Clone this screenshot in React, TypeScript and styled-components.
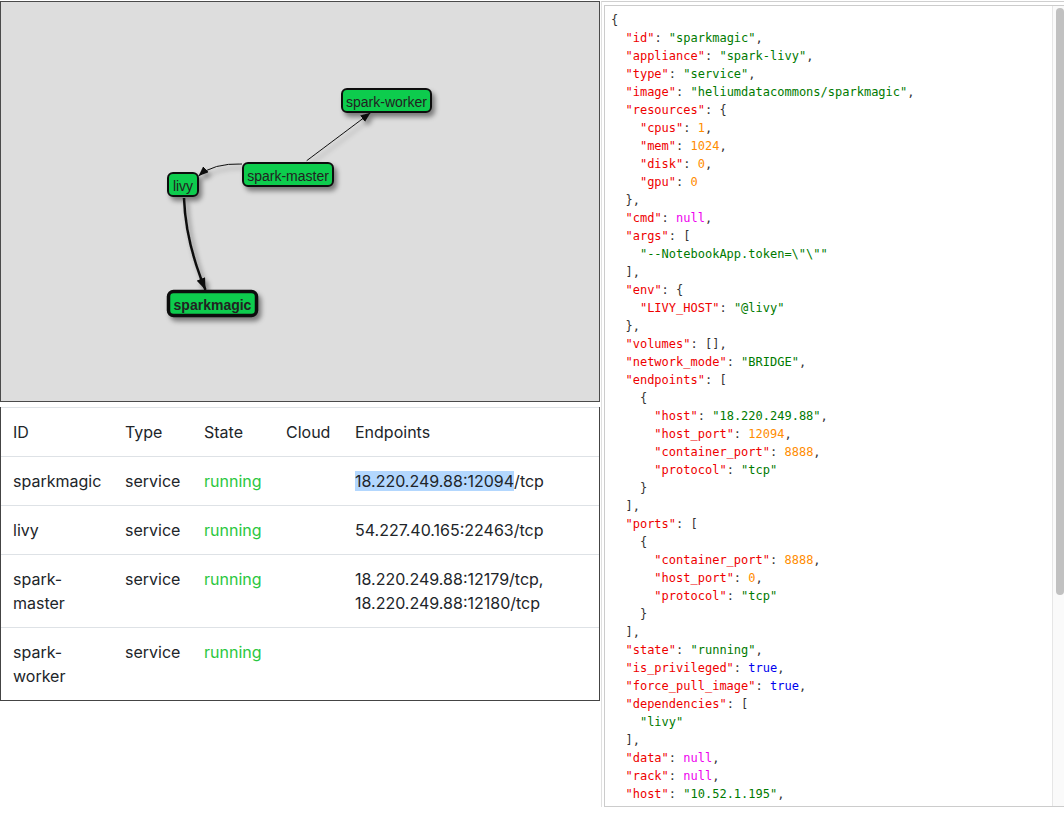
import React, { ReactNode } from "react";
import styled, { createGlobalStyle } from "styled-components";

const GlobalStyle = createGlobalStyle`
  html, body { margin: 0; padding: 0; background: #fff; overflow: hidden; }
  body { font-family: Inter, "Liberation Sans", sans-serif; color: #212529; }
  * { box-sizing: border-box; }
`;

const Page = styled.div`
  display: flex;
  align-items: flex-start;
  width: 1068px;
`;

const LeftCol = styled.div`
  width: 600px;
  flex: none;
  display: flex;
  flex-direction: column;
  padding-top: 1px;
`;

const GraphBox = styled.div`
  height: 401px;
  border: 1px solid #4a4a4a;
  background: #dddddd;
  overflow: hidden;
  svg { display: block; }
`;

const TableBox = styled.div`
  margin-top: 5px;
  border: 1px solid #444;
  border-top: none;
`;

const Table = styled.table`
  width: 100%;
  border-collapse: collapse;
  table-layout: fixed;
  font-size: 16px;
  line-height: 24px;
`;

const Th = styled.th<{ $w?: number }>`
  ${(p) => (p.$w ? `width: ${p.$w}px;` : "")}
  text-align: left;
  font-weight: 400;
  padding: 12px;
  border-top: 1px solid #dee2e6;
  vertical-align: top;
`;

const Td = styled.td`
  padding: 12px;
  border-top: 1px solid #dee2e6;
  vertical-align: top;
`;

const Running = styled.span`
  color: #2ac740;
`;

const Selected = styled.span`
  background: #b3d7fe;
`;

const RightCol = styled.div`
  width: 467px;
  flex: none;
  margin-top: 1px;
  margin-left: 1px;
  border-top: 1px solid #cfcfcf;
  border-left: 1px solid #e0e0e0;
  padding: 3px 0 0 2px;
`;

const CodeBox = styled.div`
  height: 802px;
  border: 1px solid #cccccc;
  display: flex;
  overflow: hidden;
`;

const CodeBody = styled.div`
  flex: 1;
  min-width: 0;
  padding: 5px 6px;
  font-family: "DejaVu Sans Mono", "Liberation Mono", monospace;
  font-size: 12px;
  line-height: 18px;
  color: #333;
  overflow: hidden;
`;

const ScrollTrack = styled.div`
  width: 15px;
  flex: none;
  background: #fafafa;
  border-left: 1px solid #e6e6e6;
  padding: 2px 0 0 3px;
`;

const ScrollThumb = styled.div`
  width: 8px;
  height: 587px;
  border-radius: 4px;
  background: #c1c1c1;
`;

const Line = styled.div`
  white-space: pre;
`;

const Key = styled.span` color: #ee0000; `;
const Str = styled.span` color: #007a00; `;
const Num = styled.span` color: #ff8c00; `;
const Nul = styled.span` color: #ee00ee; `;
const Bool = styled.span` color: #0000ee; `;

type J = string | number | boolean | null | J[] | { [k: string]: J };

const data: J = {
  id: "sparkmagic",
  appliance: "spark-livy",
  type: "service",
  image: "heliumdatacommons/sparkmagic",
  resources: { cpus: 1, mem: 1024, disk: 0, gpu: 0 },
  cmd: null,
  args: ['--NotebookApp.token=""'],
  env: { LIVY_HOST: "@livy" },
  volumes: [],
  network_mode: "BRIDGE",
  endpoints: [
    { host: "18.220.249.88", host_port: 12094, container_port: 8888, protocol: "tcp" },
  ],
  ports: [{ container_port: 8888, host_port: 0, protocol: "tcp" }],
  state: "running",
  is_privileged: true,
  force_pull_image: true,
  dependencies: ["livy"],
  data: null,
  rack: null,
  host: "10.52.1.195",
  last_update: null,
};

const VISIBLE_LINES = 44;

const token = (v: string | number | boolean | null) => {
  if (v === null) return <Nul>null</Nul>;
  if (typeof v === "string") return <Str>{JSON.stringify(v)}</Str>;
  if (typeof v === "number") return <Num>{String(v)}</Num>;
  return <Bool>{String(v)}</Bool>;
};

const renderJson = (v: J, depth: number, keyName: string | null, comma: boolean, out: ReactNode[]) => {
  const pad = "  ".repeat(depth);
  const prefix =
    keyName !== null ? (
      <>
        <Key>"{keyName}"</Key>:{" "}
      </>
    ) : null;
  const c = comma ? "," : "";
  if (Array.isArray(v)) {
    if (v.length === 0) {
      out.push(<Line key={out.length}>{pad}{prefix}[]{c}</Line>);
      return;
    }
    out.push(<Line key={out.length}>{pad}{prefix}[</Line>);
    v.forEach((x, i) => renderJson(x, depth + 1, null, i < v.length - 1, out));
    out.push(<Line key={out.length}>{pad}]{c}</Line>);
  } else if (v !== null && typeof v === "object") {
    const keys = Object.keys(v);
    out.push(<Line key={out.length}>{pad}{prefix}{"{"}</Line>);
    keys.forEach((k, i) => renderJson(v[k], depth + 1, k, i < keys.length - 1, out));
    out.push(<Line key={out.length}>{pad}{"}"}{c}</Line>);
  } else {
    out.push(
      <Line key={out.length}>
        {pad}
        {prefix}
        {token(v)}
        {c}
      </Line>
    );
  }
};

type Node = { id: string; x: number; y: number; w: number; h: number; main?: boolean };

const nodes: Node[] = [
  { id: "spark-worker", x: 342, y: 89, w: 89, h: 23 },
  { id: "spark-master", x: 243, y: 163, w: 90, h: 23 },
  { id: "livy", x: 168, y: 173, w: 30, h: 23 },
  { id: "sparkmagic", x: 168.5, y: 291.5, w: 88, h: 24, main: true },
];

const Graph = () => (
  <svg width={598} height={399} viewBox="1 2 598 399">
    <defs>
      <filter id="shadow" x="-30%" y="-50%" width="160%" height="200%">
        <feDropShadow dx="3" dy="4" stdDeviation="2.5" floodColor="#000" floodOpacity="0.45" />
      </filter>
      <marker id="arrow" viewBox="0 0 10 8" refX="10" refY="4" markerWidth="10" markerHeight="8" markerUnits="userSpaceOnUse" orient="auto">
        <path d="M0,0 L10,4 L0,8 z" fill="#111" />
      </marker>
      <marker id="arrowBig" viewBox="0 0 12 9" refX="12" refY="4.5" markerWidth="12" markerHeight="9" markerUnits="userSpaceOnUse" orient="auto">
        <path d="M0,0 L12,4.5 L0,9 z" fill="#111" />
      </marker>
    </defs>
    <g filter="url(#shadow)">
      <path d="M306.7,160.7 L370.5,112.8" stroke="#111" strokeWidth={1} fill="none" markerEnd="url(#arrow)" />
      <path d="M242,164 Q213,163 198.5,176" stroke="#111" strokeWidth={1} fill="none" markerEnd="url(#arrow)" />
      <path d="M184,198 Q185.5,242 205.5,290" stroke="#111" strokeWidth={2.5} fill="none" markerEnd="url(#arrowBig)" />
      {nodes.map((n) => (
        <rect
          key={n.id}
          x={n.x}
          y={n.y}
          width={n.w}
          height={n.h}
          rx={5}
          ry={5}
          fill="#10cc4e"
          stroke="#111"
          strokeWidth={n.main ? 3.5 : 2}
        />
      ))}
    </g>
    {nodes.map((n) => (
      <text
        key={n.id}
        x={n.x + n.w / 2}
        y={n.y + n.h / 2 + 1}
        textAnchor="middle"
        dominantBaseline="central"
        fontFamily="'Liberation Sans', Arial, sans-serif"
        fontSize={14}
        fontWeight={n.main ? 700 : 400}
        fill="#222"
      >
        {n.id}
      </text>
    ))}
  </svg>
);

type Row = { id: ReactNode; type: string; state: string; endpoints: ReactNode };

const rows: Row[] = [
  {
    id: "sparkmagic",
    type: "service",
    state: "running",
    endpoints: (
      <>
        <Selected>18.220.249.88:12094</Selected>/tcp
      </>
    ),
  },
  { id: "livy", type: "service", state: "running", endpoints: "54.227.40.165:22463/tcp" },
  {
    id: "spark-master",
    type: "service",
    state: "running",
    endpoints: "18.220.249.88:12179/tcp, 18.220.249.88:12180/tcp",
  },
  { id: "spark-worker", type: "service", state: "running", endpoints: "" },
];

export default function App() {
  const lines: ReactNode[] = [];
  renderJson(data, 0, null, false, lines);
  return (
    <>
      <GlobalStyle />
      <Page>
        <LeftCol>
          <GraphBox>
            <Graph />
          </GraphBox>
          <TableBox>
            <Table>
              <thead>
                <tr>
                  <Th $w={112}>ID</Th>
                  <Th $w={79}>Type</Th>
                  <Th $w={82}>State</Th>
                  <Th $w={69}>Cloud</Th>
                  <Th>Endpoints</Th>
                </tr>
              </thead>
              <tbody>
                {rows.map((r, i) => (
                  <tr key={i}>
                    <Td>{r.id}</Td>
                    <Td>{r.type}</Td>
                    <Td>
                      <Running>{r.state}</Running>
                    </Td>
                    <Td></Td>
                    <Td>{r.endpoints}</Td>
                  </tr>
                ))}
              </tbody>
            </Table>
          </TableBox>
        </LeftCol>
        <RightCol>
          <CodeBox>
            <CodeBody>{lines.slice(0, VISIBLE_LINES)}</CodeBody>
            <ScrollTrack>
              <ScrollThumb />
            </ScrollTrack>
          </CodeBox>
        </RightCol>
      </Page>
    </>
  );
}
